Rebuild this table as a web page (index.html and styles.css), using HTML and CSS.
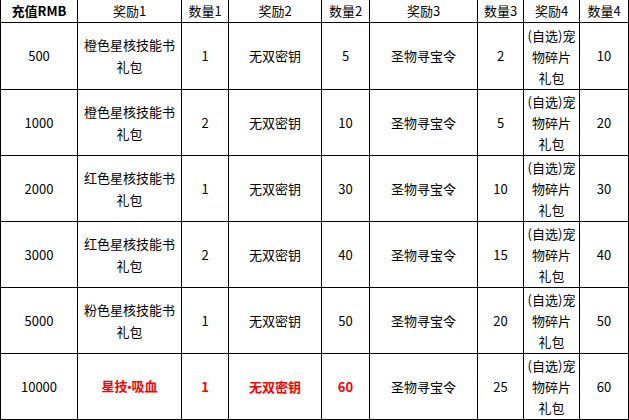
FILE: index.html
```html
<!DOCTYPE html>
<html>
<head>
<meta charset="utf-8">
<link rel="stylesheet" href="styles.css">
</head>
<body>
<table class="rewards">
  <colgroup>
    <col class="c1"><col class="c2"><col class="c3"><col class="c4"><col class="c5"><col class="c6"><col class="c7"><col class="c8"><col class="c9">
  </colgroup>
  <thead>
    <tr class="head">
      <th class="bold">充值RMB</th><th>奖励1</th><th>数量1</th><th>奖励2</th><th>数量2</th><th>奖励3</th><th>数量3</th><th>奖励4</th><th>数量4</th>
    </tr>
  </thead>
  <tbody>
    <tr class="first">
      <td>500</td><td>橙色星核技能书礼包</td><td>1</td><td>无双密钥</td><td>5</td><td>圣物寻宝令</td><td>2</td><td class="pet">(自选)宠物碎片礼包</td><td>10</td>
    </tr>
    <tr>
      <td>1000</td><td>橙色星核技能书礼包</td><td>2</td><td>无双密钥</td><td>10</td><td>圣物寻宝令</td><td>5</td><td class="pet">(自选)宠物碎片礼包</td><td>20</td>
    </tr>
    <tr>
      <td>2000</td><td>红色星核技能书礼包</td><td>1</td><td>无双密钥</td><td>30</td><td>圣物寻宝令</td><td>10</td><td class="pet">(自选)宠物碎片礼包</td><td>30</td>
    </tr>
    <tr>
      <td>3000</td><td>红色星核技能书礼包</td><td>2</td><td>无双密钥</td><td>40</td><td>圣物寻宝令</td><td>15</td><td class="pet">(自选)宠物碎片礼包</td><td>40</td>
    </tr>
    <tr>
      <td>5000</td><td>粉色星核技能书礼包</td><td>1</td><td>无双密钥</td><td>50</td><td>圣物寻宝令</td><td>20</td><td class="pet">(自选)宠物碎片礼包</td><td>50</td>
    </tr>
    <tr>
      <td>10000</td><td class="hot">星技<span class="dot">•</span>吸血</td><td class="hot">1</td><td class="hot">无双密钥</td><td class="hot">60</td><td>圣物寻宝令</td><td>25</td><td class="pet">(自选)宠物碎片礼包</td><td>60</td>
    </tr>
  </tbody>
</table>
</body>
</html>
```
FILE: styles.css
```css
html, body {
  margin: 0;
  padding: 0;
  background: #fff;
}
body {
  overflow: hidden;
}
.rewards {
  border-collapse: collapse;
  table-layout: fixed;
  width: 629px;
  margin-top: -1px;
  font-family: "Noto Sans CJK SC", "Microsoft YaHei", sans-serif;
  font-size: 13px;
  color: #000;
}
.c1 { width: 77px; }
.c2 { width: 104px; }
.c3 { width: 47px; }
.c4 { width: 93px; }
.c5 { width: 48px; }
.c6 { width: 108px; }
.c7 { width: 46px; }
.c8 { width: 56px; }
.c9 { width: 49px; }
.rewards th,
.rewards td {
  border: 1px solid #000;
  padding: 0 5px;
  text-align: center;
  vertical-align: middle;
  line-height: 22px;
  font-weight: normal;
  word-break: break-all;
}
.rewards th.bold {
  font-weight: bold;
}
.head th {
  height: 22px;
}
.rewards tbody td {
  height: 65px;
}
.rewards tbody tr.first td {
  height: 66px;
}
.rewards td.pet {
  padding: 0 3px;
  line-height: 21px;
}
.rewards td.hot {
  color: #ff0000;
  font-weight: bold;
}
.dot {
  font-family: "Liberation Sans", sans-serif;
  font-size: 11px;
}
```
